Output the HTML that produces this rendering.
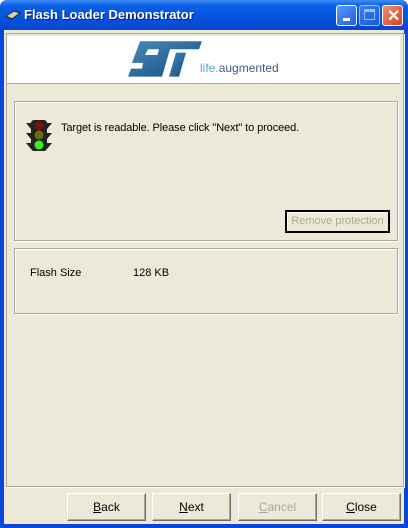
<!DOCTYPE html><html><head><style>
body{margin:0;width:408px;height:528px;overflow:hidden;font-family:Tahoma,"Liberation Sans",sans-serif;font-size:11px;}
.win{position:absolute;left:0;top:0;width:408px;height:528px;background:#0a47d8;border-radius:7px 7px 0 0;}
.title{position:absolute;left:0;top:0;width:408px;height:30px;background:linear-gradient(#3d8bf5,#0a5fe6 20%,#0550dc 70%,#0846c8);border-radius:7px 7px 0 0;}
.title span{position:absolute;left:24px;top:7px;color:#fff;font-weight:bold;font-size:13px;text-shadow:1px 1px #0a1e78;}
.tb{position:absolute;top:5px;width:21px;height:21px;border:1px solid #fff;border-radius:3px;box-sizing:border-box;background:linear-gradient(135deg,#5a9af8,#1f5fe0);}
.client{position:absolute;left:4px;top:30px;width:400px;height:494px;background:#ece9d8;}
.abs{position:absolute;}
.grp{position:absolute;border:1px solid #aca899;box-shadow:inset 1px 1px #fff,1px 1px #fff;}
.btn{position:absolute;top:493px;width:79px;height:28px;box-sizing:border-box;background:#ece9d8;border:1px solid;border-color:#fff #716f64 #716f64 #fff;box-shadow:inset -1px -1px #aca899;text-align:center;line-height:26px;font-size:12px;}
</style></head><body>
<div class="win"></div>
<div class="title"><svg class="abs" style="left:5px;top:9px" width="16" height="12"><path d="M1 7 L9 2 L15 4 L7 10 Z" fill="#ccc" stroke="#222"/><path d="M1 7 L7 10 L7 11 L1 8Z" fill="#333"/></svg><span>Flash Loader Demonstrator</span>
<div class="tb" style="left:336px"><div class="abs" style="left:6px;top:12px;width:7px;height:3px;background:#fff"></div></div>
<div class="tb" style="left:359px;opacity:.6"><div class="abs" style="left:4px;top:3px;width:11px;height:11px;border:1px solid #fff;border-top-width:3px;box-sizing:border-box"></div></div>
<div class="tb" style="left:382px;background:linear-gradient(135deg,#f09070,#d8401c)"><span style="left:4px;top:0px;font-size:16px;text-shadow:none">✕</span></div>
</div>
<div class="client">
<div class="abs" style="left:2px;top:3px;width:396px;height:452px;border:1px solid #aca899;box-shadow:1px 1px #fff"></div>
<div class="abs" style="left:3px;top:6px;width:393px;height:47px;background:#fff;border-bottom:1px solid #aca899"></div>
<svg class="abs" style="left:122px;top:9px" width="80" height="41" viewBox="0 0 80 36" preserveAspectRatio="none"><defs><linearGradient id="g" x1="0" y1="0" x2="1" y2="1"><stop offset="0" stop-color="#4a8ab8"/><stop offset="1" stop-color="#104e80"/></linearGradient></defs>
<path d="M14 2 L76 2 L73 9 L44 9 L36 33 L26 33 L33 9 L22 9 L19 14 L34 14 L28 33 L2 33 L5 26 L16 26 L17 21 L6 21 Z" fill="url(#g)"/><path d="M50 12 L60 12 L53 33 L43 33 Z" fill="url(#g)"/></svg>
<div class="abs" style="left:196px;top:31px;font-family:'Liberation Sans',sans-serif;font-size:12px;color:#3a5f86"><span style="color:#52a8d8">life.</span>augmented</div>
<div class="grp" style="left:10px;top:71px;width:382px;height:138px"></div>
<svg class="abs" style="left:21px;top:89px" width="30" height="34"><rect x="6" y="1" width="16" height="31" rx="3" fill="#222"/><path d="M1 4h5v6zM27 4h-5v6zM1 14h5v6zM27 14h-5v6zM1 24h5v6zM27 24h-5v6z" fill="#222"/><circle cx="14" cy="7" r="4.5" fill="#7a1010"/><circle cx="14" cy="16" r="4.5" fill="#6e6a10"/><circle cx="14" cy="26" r="4.5" fill="#3cf020"/></svg>
<div class="abs" style="left:57px;top:92px;font-size:11px;letter-spacing:-0.1px">Target is readable. Please click "Next" to proceed.</div>
<div class="abs" style="left:281px;top:180px;width:105px;height:23px;border:2px solid #000;box-sizing:border-box;color:#aca899;text-align:center;line-height:19px;box-shadow:inset 1px 1px #fff">Remove protection</div>
<div class="grp" style="left:10px;top:218px;width:382px;height:64px"></div>
<div class="abs" style="left:26px;top:237px">Flash Size</div>
<div class="abs" style="left:129px;top:237px">128 KB</div>
</div>
<div class="btn" style="left:67px"><u>B</u>ack</div>
<div class="btn" style="left:152px"><u>N</u>ext</div>
<div class="btn" style="left:238px;color:#aca899"><u>C</u>ancel</div>
<div class="btn" style="left:322px"><u>C</u>lose</div>
</body></html>
